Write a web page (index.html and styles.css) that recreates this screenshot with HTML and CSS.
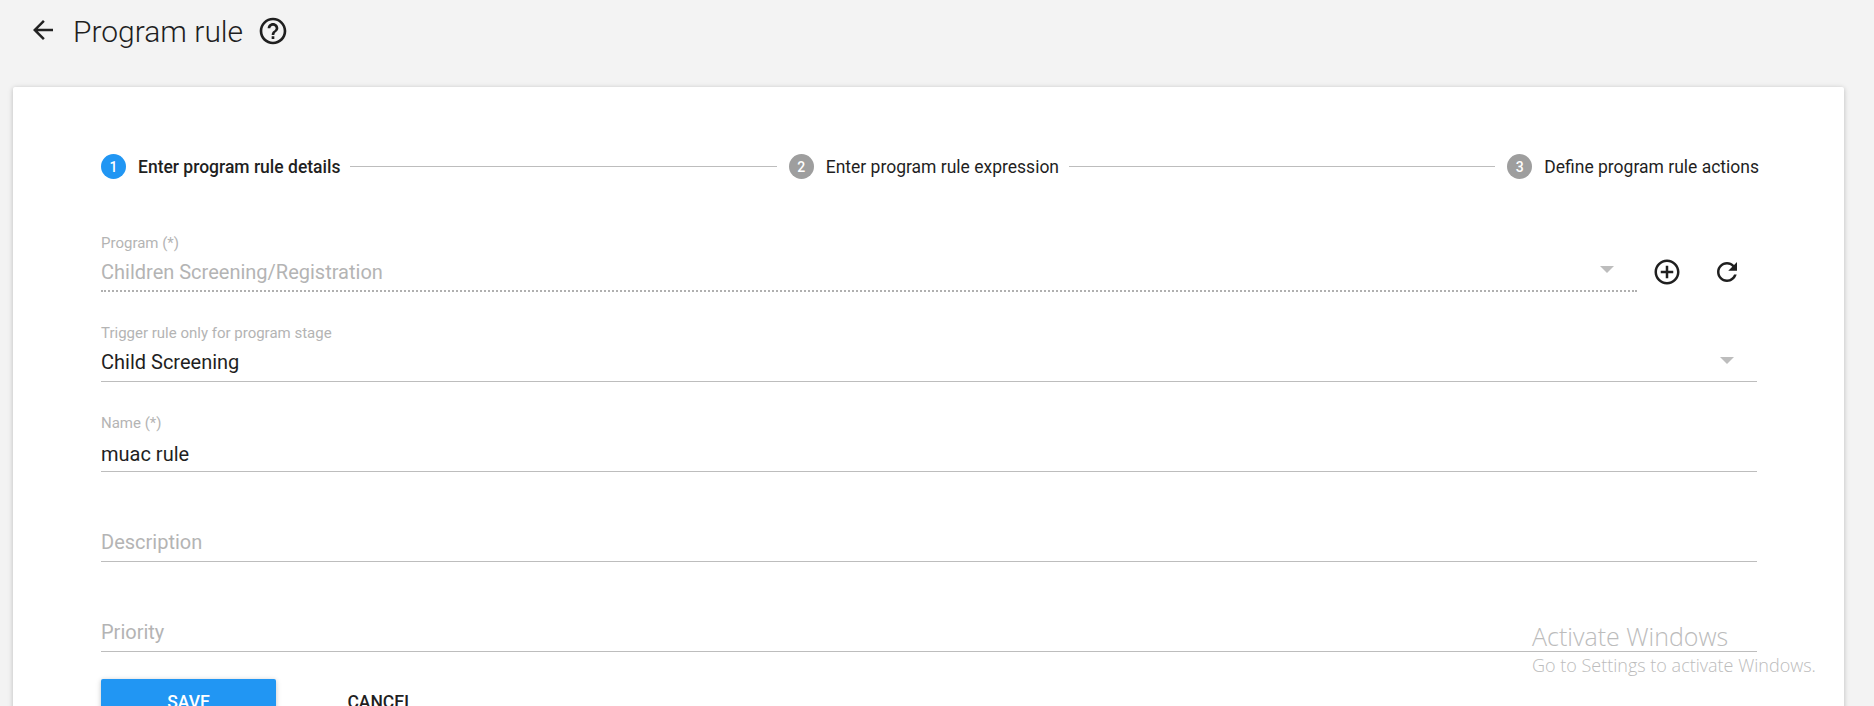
FILE: index.html
```html
<!DOCTYPE html>
<html lang="en">
<head>
  <meta charset="UTF-8" />
  <title>Program rule</title>
  <link rel="stylesheet" href="styles.css">
</head>
<body>

  <div class="page-head">
    <svg class="back-icon" viewBox="0 0 24 24"><path d="M20 11H7.83l5.59-5.59L12 4l-8 8 8 8 1.41-1.41L7.83 13H20v-2z"/></svg>
    <h1>Program rule</h1>
    <svg class="help-icon" viewBox="0 0 24 24"><path d="M11 18h2v-2h-2v2zm1-16C6.48 2 2 6.48 2 12s4.48 10 10 10 10-4.48 10-10S17.52 2 12 2zm0 18c-4.41 0-8-3.59-8-8s3.59-8 8-8 8 3.59 8 8-3.59 8-8 8zm0-14c-2.21 0-4 1.79-4 4h2c0-1.1.9-2 2-2s2 .9 2 2c0 2-3 1.75-3 5h2c0-2.25 3-2.5 3-5 0-2.21-1.79-4-4-4z"/></svg>
  </div>

  <div class="card">

    <!-- Stepper -->
    <div class="stepper">
      <div class="step active"><span class="step-num">1</span><span class="step-label">Enter program rule details</span></div>
      <div class="step-line"></div>
      <div class="step"><span class="step-num">2</span><span class="step-label">Enter program rule expression</span></div>
      <div class="step-line"></div>
      <div class="step"><span class="step-num">3</span><span class="step-label">Define program rule actions</span></div>
    </div>

    <!-- Form fields -->
    <div class="field-row">
      <div class="field disabled">
        <label>Program (*)</label>
        <div class="value muted">Children Screening/Registration</div>
        <span class="arrow"></span>
      </div>
      <div class="field-actions">
        <svg viewBox="0 0 24 24"><path d="M13 7h-2v4H7v2h4v4h2v-4h4v-2h-4V7zm-1-5C6.48 2 2 6.48 2 12s4.48 10 10 10 10-4.48 10-10S17.52 2 12 2zm0 18c-4.41 0-8-3.59-8-8s3.59-8 8-8 8 3.59 8 8-3.59 8-8 8z"/></svg>
        <svg viewBox="0 0 24 24"><path d="M17.65 6.35C16.2 4.9 14.21 4 12 4c-4.42 0-7.99 3.58-7.99 8s3.57 8 7.99 8c3.73 0 6.84-2.55 7.73-6h-2.08c-.82 2.33-3.04 4-5.65 4-3.31 0-6-2.69-6-6s2.69-6 6-6c1.66 0 3.14.69 4.22 1.78L13 11h7V4l-2.35 2.35z"/></svg>
      </div>
    </div>

    <div class="field">
      <label>Trigger rule only for program stage</label>
      <div class="value">Child Screening</div>
      <span class="arrow"></span>
    </div>

    <div class="field field-name">
      <label>Name (*)</label>
      <div class="value">muac rule</div>
    </div>

    <div class="field">
      <div class="value muted">Description</div>
    </div>

    <div class="field">
      <div class="value muted">Priority</div>
    </div>

    <div class="buttons">
      <button class="btn-save">SAVE</button>
      <button class="btn-cancel">CANCEL</button>
    </div>
  </div>

  <!-- Windows watermark -->
  <div class="watermark">
    <div class="wm-title">Activate Windows</div>
    <div class="wm-sub">Go to Settings to activate Windows.</div>
  </div>

</body>
</html>
```

FILE: styles.css
```css
html, body {
  height: 100%;
}

body {
  margin: 0;
  background: #f3f3f3;
  font-family: Roboto, sans-serif;
  color: #1f1f1f;
  overflow: hidden;
}

.page-head {
  display: flex;
  align-items: center;
  height: 62px;
  padding-left: 28px;
}

.back-icon {
  width: 30px;
  height: 30px;
  margin: 0 15px 2px 0;
  fill: #222;
}

.page-head h1 {
  margin: 0;
  font-size: 30px;
  font-weight: 300;
  color: #1f1f1f;
}

.help-icon {
  width: 32px;
  height: 32px;
  margin-left: 14px;
  fill: #1f1f1f;
}

.card {
  margin: 25px 30px 0 13px;
  padding: 67px 87px 0 88px;
  background: #fff;
  border-radius: 2px;
  box-shadow: 0 1px 6px rgba(0,0,0,0.12), 0 1px 4px rgba(0,0,0,0.12);
}

.stepper {
  display: flex;
  align-items: center;
  height: 25px;
  margin: 0 -2px 23px 0;
}

.step {
  display: flex;
  align-items: center;
  font-size: 17.5px;
}

.step.active .step-label {
  font-weight: 500;
}

.step-num {
  display: flex;
  align-items: center;
  justify-content: center;
  width: 25px;
  height: 25px;
  margin-right: 12px;
  border-radius: 50%;
  background: #9e9e9e;
  color: #fff;
  font-size: 14px;
  font-weight: 500;
}

.step.active .step-num {
  background: #2196f3;
}

.step-line {
  flex: 1;
  height: 1px;
  margin: 0 12px 0 10px;
  background: #bdbdbd;
}

.field-row {
  display: flex;
  align-items: flex-end;
}

.field-row .field {
  flex: 1;
}

.field {
  position: relative;
  display: flex;
  flex-direction: column;
  justify-content: flex-end;
  height: 90px;
  border-bottom: 1px solid #bdbdbd;
  box-sizing: border-box;
}

.field.disabled {
  border-bottom: 2px dotted #b0b0b0;
}

.field label {
  font-size: 15px;
  line-height: 16px;
  color: #b4b4b4;
  margin-bottom: 8px;
}

.value {
  font-size: 20px;
  line-height: 26px;
  padding-bottom: 6px;
}

.value.muted {
  color: #b4b4b4;
}

.field.disabled .value {
  padding-bottom: 5px;
}

.field-name label {
  margin-bottom: 10px;
}

.field-name .value {
  padding-bottom: 4px;
}

/* dropdown caret sits over the field */
.arrow {
  position: absolute;
  right: 23px;
  bottom: 17px;
  width: 0;
  height: 0;
  border-left: 7px solid transparent;
  border-right: 7px solid transparent;
  border-top: 7px solid #bdbdbd;
}

.field-actions {
  display: flex;
  align-items: center;
  gap: 30px;
  width: 120px;
  padding: 0 0 5px 15px;
  box-sizing: border-box;
}

.field-actions svg {
  width: 30px;
  height: 30px;
  fill: #1f1f1f;
}

.buttons {
  display: flex;
  align-items: flex-start;
  gap: 17px;
  margin-top: 27px;
  height: 60px;
}

.buttons button {
  width: 175px;
  height: 46px;
  border: none;
  border-radius: 2px;
  font-family: Roboto, sans-serif;
  font-size: 17.5px;
  font-weight: 500;
}

.btn-save {
  background: #2196f3;
  color: #fff;
  box-shadow: 0 1px 6px rgba(0,0,0,0.12), 0 1px 4px rgba(0,0,0,0.12);
}

.btn-cancel {
  background: transparent;
  color: #1f1f1f;
}

.watermark {
  position: absolute;
  left: 1532px;
  top: 621px;
  color: #bcbcbc;
  font-family: "Open Sans", sans-serif;
}

.wm-title {
  font-size: 25px;
  font-weight: 300;
  line-height: 30px;
}

.wm-sub {
  font-size: 18px;
  font-weight: 300;
  line-height: 24px;
  margin-top: 2px;
}
```
